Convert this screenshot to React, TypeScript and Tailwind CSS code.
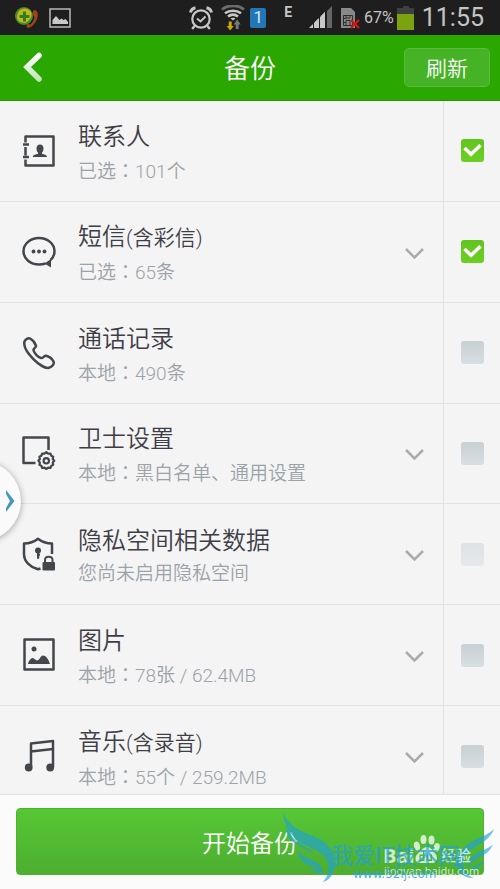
import { useState, type ReactNode } from "react";

type Item = {
  id: string;
  title: string;
  note?: string;
  label?: string;
  detail: string;
  expandable: boolean;
  disabled?: boolean;
  icon: ReactNode;
};

const iconClass = "h-[34px] w-[34px] shrink-0 text-[#43474b]";

function ContactsIcon() {
  return (
    <svg className={iconClass} viewBox="0 0 34 34" fill="none" stroke="currentColor" strokeWidth="2.500" aria-hidden="true">
      <path d="M3.500 8.500V2.500h28v29h-28v-6M3.500 13v8.500" strokeLinejoin="round" />
      <path d="M1 10.500h6M1 23h6" />
      <path
        d="M18 10.500c2 0 3.500 1.500 3.500 4 0 2-.8 3.400-1.500 4v1.300c1.800.6 5 1 5 3.200H10.800c0-2.200 3.300-2.600 5.200-3.200v-1.300c-.8-.6-1.500-2-1.500-4 0-2.500 1.500-4 3.500-4z"
        fill="currentColor"
        stroke="none"
      />
    </svg>
  );
}

function MessageIcon() {
  return (
    <svg className={iconClass} viewBox="0 0 34 34" fill="none" stroke="currentColor" strokeWidth="2.500" aria-hidden="true">
      <path d="M28.500 25c2.500-2.300 4-5.300 4-8.700C32.500 8.900 25.600 3 17 3S1.500 8.900 1.500 16.300 8.400 29.500 17 29.500c2.400 0 4.700-.4 6.700-1.200" />
      <path d="M22.500 28.500l6.500 4v-8.500z" fill="currentColor" stroke="none" />
      <g fill="currentColor" stroke="none">
        <circle cx="11.500" cy="16.500" r="1.900" />
        <circle cx="17" cy="16.500" r="1.900" />
        <circle cx="22.500" cy="16.500" r="1.900" />
      </g>
    </svg>
  );
}

function PhoneIcon() {
  return (
    <svg className={iconClass} viewBox="0 0 34 34" fill="none" stroke="currentColor" strokeWidth="2.500" strokeLinejoin="round" aria-hidden="true">
      <path d="M2.500 5.500C3.500 3 6.500 1.600 8.500 2.800c2.500 1.500 4.800 4.700 5.500 7 .5 1.700-3 2.500-2.500 4.500.7 3 4.800 7 7.500 7.700 2.200.5 3.200-2.700 5-2.200 3 .8 6.500 3.700 7.500 5.700 1.200 2.500-1.500 5.500-4.500 6.300C20.500 33.500 0 15.500 2.500 5.500z" />
    </svg>
  );
}

function SettingsIcon() {
  return (
    <svg className={iconClass} viewBox="0 0 34 34" fill="none" stroke="currentColor" strokeWidth="2.500" strokeLinejoin="round" aria-hidden="true">
      <path d="M13.500 27H1.500V1.500h25V14" />
      <path
        strokeWidth="2.200"
        d="M22.500 17.600L24.300 16.200L26.100 17.600L28.400 17.500L29.200 19.700L31.200 20.800L30.700 23L32.200 24.800L30.700 26.600L31.200 28.800L29.200 29.900L28.400 32L26.100 31.700L24.300 33L22.500 31.700L20.200 32L19.400 29.900L17.400 28.800L17.900 26.600L16.400 24.800L17.900 23L17.400 20.800L19.400 19.700L20.200 17.500Z"
      />
      <circle cx="24.300" cy="24.800" r="2.700" strokeWidth="2.200" />
    </svg>
  );
}

function PrivacyIcon() {
  return (
    <svg className={iconClass} viewBox="0 0 34 34" fill="none" stroke="currentColor" strokeWidth="2.500" strokeLinejoin="round" aria-hidden="true">
      <path d="M30 17V6.500C24.500 6.500 20 5 16 1.800 12 5 7.500 6.500 2 6.500V17c0 7.500 6 13 14 15.300l2.500-.8" />
      <g fill="currentColor" stroke="none">
        <circle cx="16" cy="13.500" r="3" />
        <path d="M15 14h2.200v2.700H18v2h-.8v3H15z" />
        <rect x="20.500" y="25" width="12.500" height="8.500" rx="1" />
      </g>
      <path d="M23 25.500V23c0-4.300 7.500-4.300 7.500 0v2.500" strokeWidth="2" />
    </svg>
  );
}

function PictureIcon() {
  return (
    <svg className={iconClass} viewBox="0 0 34 34" fill="none" stroke="currentColor" strokeWidth="2.500" strokeLinejoin="round" aria-hidden="true">
      <rect x="2.500" y="1.500" width="29" height="30" />
      <circle cx="12" cy="11" r="2.500" fill="currentColor" stroke="none" />
      <path d="M6 26c.5-3 3-6 4.500-6 2 0 3 2.500 4.500 2.500 2.500 0 3.500-5 6-5 3.500 0 6 5 7 8.500z" fill="currentColor" stroke="none" />
    </svg>
  );
}

function MusicIcon() {
  return (
    <svg className={iconClass} viewBox="0 0 34 34" fill="none" stroke="currentColor" strokeWidth="2.500" strokeLinejoin="round" aria-hidden="true">
      <path d="M9 28V4.500L31 2v26M9 12.500L31 10" />
      <circle cx="6.700" cy="28.500" r="3.900" fill="currentColor" stroke="none" />
      <circle cx="28.200" cy="28.500" r="3.900" fill="currentColor" stroke="none" />
    </svg>
  );
}

const items: Item[] = [
  { id: "contacts", title: "联系人", label: "已选", detail: "101个", expandable: false, icon: <ContactsIcon /> },
  { id: "sms", title: "短信", note: "(含彩信)", label: "已选", detail: "65条", expandable: true, icon: <MessageIcon /> },
  { id: "calls", title: "通话记录", label: "本地", detail: "490条", expandable: false, icon: <PhoneIcon /> },
  { id: "settings", title: "卫士设置", label: "本地", detail: "黑白名单、通用设置", expandable: true, icon: <SettingsIcon /> },
  { id: "privacy", title: "隐私空间相关数据", detail: "您尚未启用隐私空间", expandable: true, disabled: true, icon: <PrivacyIcon /> },
  { id: "pictures", title: "图片", label: "本地", detail: "78张 / 62.4MB", expandable: true, icon: <PictureIcon /> },
  { id: "music", title: "音乐", note: "(含录音)", label: "本地", detail: "55个 / 259.2MB", expandable: true, icon: <MusicIcon /> },
];

function StatusBar() {
  return (
    <div className="flex h-[35px] shrink-0 items-center justify-between bg-[#1e1e1e] pr-4 pl-[15px] text-[#c4c4c4]">
      <div className="flex items-center gap-[10px]">
        <svg className="h-6 w-6" viewBox="0 0 24 24" aria-hidden="true">
          <circle cx="9" cy="10" r="9" fill="#3f8f2c" />
          <path d="M4 5c4-4 10-3 12 1 2 5-2 9-6 11-5 0-8-3-8-6 0-2 1-4 2-6z" fill="#c5b51c" />
          <path d="M8 5.500h3V9h3.500v3H11v3.500H8V12H4.500V9H8z" fill="#2f7d22" />
          <path d="M20 4c3 1 3.500 5 2 9-2 5-6 9-9.500 9-1.500-1-1.500-3 0-4l3 .5c2-2 3.500-4.500 4-7.500l-2-3c0-2 1-4 2.500-4z" fill="#9c4418" />
        </svg>
        <svg className="h-5 w-[22px]" viewBox="0 0 22 20" fill="none" aria-hidden="true">
          <rect x="1" y="1" width="20" height="18" stroke="#b9b9b9" strokeWidth="1.500" />
          <path d="M3.500 16v-4l3.500-4 3.500 4 2-1.500 2 1.500 2-1 2.500 3v2z" fill="#c9c9c9" />
        </svg>
      </div>
      <div className="flex h-full items-center">
        <svg className="h-6 w-6" viewBox="0 0 24 24" fill="none" stroke="#c6c6c6" aria-hidden="true">
          <circle cx="12" cy="13" r="8.700" strokeWidth="2.200" />
          <path d="M8 12.500l3.500 3 5-5" strokeWidth="2" />
          <path d="M1.500 6.500c.5-2.500 2.500-4.300 5-4.800M22.500 6.500c-.5-2.500-2.500-4.300-5-4.800" strokeWidth="3" />
          <path d="M5.500 20l-2.300 3M18.500 20l2.300 3" strokeWidth="2.300" />
        </svg>
        <svg className="ml-2 h-[26px] w-6" viewBox="0 0 24 26" fill="none" aria-hidden="true">
          <path d="M1 4.500C7-.5 17-.5 23 4.500" stroke="#6b6b6b" strokeWidth="2.800" />
          <path d="M4 8.300c4.500-3.500 11.500-3.500 16 0M7 11.500c3-2.300 7-2.300 10 0" stroke="#c8c8c8" strokeWidth="2.600" />
          <path d="M9.500 13.500c1.500-1 3.500-1 5 0L12 15.500z" fill="#c8c8c8" />
          <path d="M7.700 16.500h3V21h2l-3.500 4.500L5.700 21h2z" fill="#cda900" />
          <path d="M14.700 24h3v-4.500h2l-3.500-5-3.500 5h2z" fill="#777" />
        </svg>
        <span className="ml-[5px] flex h-5 w-4 items-center justify-center rounded-[2px] bg-[#2377b8] text-[17px] leading-none text-[#dde9f2]">
          1
        </span>
        <span className="ml-[18px] self-start pt-1 text-[14px] leading-4 font-bold">E</span>
        <svg className="ml-[17px] h-[23px] w-6" viewBox="0 0 24 23" aria-hidden="true">
          <path d="M0 22l4-4v4zM6 22v-6l4-4v10zM12 22V10l4-4v16z" fill="#c8c8c8" />
          <path d="M5 22v-5l4-4v9zM11 22V11l5-5v16z" fill="#c8c8c8" />
          <path d="M18 22V5l5-5v22z" fill="#666" />
        </svg>
        <svg className="ml-[7px] h-[22px] w-5" viewBox="0 0 20 22" fill="none" aria-hidden="true">
          <path d="M1 1h10l4 4v16H1z" fill="#888" />
          <path d="M3.500 8.500h9v10h-9zM6 8.500V11h4V8.500M6 18.500v-5h4v5M3.500 11.500H6M3.500 15.500H6" stroke="#2d2d2d" />
          <path d="M11 13l8 8M19 13l-8 8" stroke="#cf1717" strokeWidth="2.300" />
        </svg>
        <span className="ml-1 text-[16px] leading-none">67%</span>
        <svg className="ml-[3px] h-6 w-[17px]" viewBox="0 0 17 24" aria-hidden="true">
          <path d="M6 0h6v2h5v6H0V2h6z" fill="#3f3f3f" />
          <path d="M0 8h17v16H0z" fill="#7ba30d" />
        </svg>
        <span className="ml-2 text-[25px] leading-none">11:55</span>
      </div>
    </div>
  );
}

function Row({ item, checked, onToggle }: { item: Item; checked: boolean; onToggle: () => void }) {
  return (
    <li className="flex border-b border-[#e2e2e2]">
      <div className="flex min-w-0 flex-1 items-center pr-[19px] pl-[22px]">
        {item.icon}
        <label htmlFor={item.id} className="ml-[22px] min-w-0 flex-1 pt-1 font-[350] whitespace-nowrap">
          <span className="block text-[24px] leading-9 text-[#3e3e46]">
            {item.title}
            {item.note && <span className="text-[21px]">{item.note}</span>}
          </span>
          <span className="block text-[19px] leading-[30px] text-[#9ba3a8]">
            {item.label}
            {item.label && (
              <span lang="zh-TW" className="font-['Noto_Sans_CJK_TC',sans-serif]">
                ：
              </span>
            )}
            {item.detail}
          </span>
        </label>
        {item.expandable && (
          <button type="button" aria-label="展开" className="flex h-10 w-[19px] shrink-0 items-center pt-1">
            <svg className="h-3 w-[19px]" viewBox="0 0 19 12" fill="none" stroke="#a9acae" strokeWidth="2.500" aria-hidden="true">
              <path d="M1 1l8.500 8.500L18 1" />
            </svg>
          </button>
        )}
      </div>
      <div className="grid w-[57px] shrink-0 place-items-center border-l border-[#e2e2e2]">
        <input
          id={item.id}
          type="checkbox"
          checked={checked}
          disabled={item.disabled}
          onChange={onToggle}
          className="col-start-1 row-start-1 h-[23px] w-[23px] appearance-none rounded-[3px] bg-linear-to-b from-[#c9d0d4] to-[#d8dfe2] checked:from-[#62c41f] checked:to-[#6bd022] disabled:from-[#dee2e4] disabled:to-[#e5e9eb]"
        />
        {checked && (
          <svg
            className="pointer-events-none col-start-1 row-start-1 h-[23px] w-[23px]"
            viewBox="0 0 23 23"
            fill="none"
            stroke="#fff"
            strokeWidth="3.500"
            aria-hidden="true"
          >
            <path d="M3.500 9l6.500 6.300L19.500 6.300" />
          </svg>
        )}
      </div>
    </li>
  );
}

function Watermark() {
  return (
    <div className="pointer-events-none absolute right-0 bottom-0 h-[80px] w-[220px]">
      <svg className="absolute inset-0 h-full w-full" viewBox="0 0 220 80" aria-hidden="true">
        <g fill="#fff" fillOpacity="0.750">
          <ellipse cx="137" cy="37" rx="3" ry="4.500" transform="rotate(-15 137 37)" />
          <ellipse cx="143.500" cy="30.500" rx="3" ry="4.500" />
          <ellipse cx="151.500" cy="31" rx="3" ry="4.500" />
          <ellipse cx="156.500" cy="38.500" rx="3" ry="4.500" transform="rotate(20 156.500 38.500)" />
          <path
            fillRule="evenodd"
            d="M147 38c4 0 6 4.500 8.500 7s2 9-3 9H140c-5 0-6-6-2.500-9s5.500-7 9.500-7zM143 41.500v4h-3.500v6.500h5V41.500zM140.800 47h2.400v3.500h-2.400zM146.500 45.500V52h5.500v-6.500h-1.500v5H148v-5z"
          />
        </g>
        <g fill="#21a0dc" fillOpacity="0.650">
          <path d="M3 3c5 12 13 17 25 22 16 6 27 14 27 29 0 10-6 18-12 19 5-6 7-12 5-19-3-10-14-14-25-19C12 30 4 17 3 3z" />
          <path d="M5 17c6 12 15 19 26 24l3 4c-4-3-8-4-13-7C12 33 6 28 5 17z" />
          <path d="M17 41c5 7 12 8 19 12 5 3 7 7 6 12-3-5-6-6-11-8-8-3-13-8-14-16z" />
          <path d="M31 60c6 0 11 1 13 6-5-3-8-1-13-6z" />
          <path d="M214 20c-4 10-11 13-19 18-9 6-14 14-11 22 2 5 6 8 10 9-9 1-16-5-17-14-1-11 8-19 18-24 8-4 14-6 19-11z" />
          <path d="M213 35c-3 8-9 11-15 14-6 3-9 7-9 11-3-6 0-11 6-15 7-4 14-5 18-10z" />
          <path d="M204 52c-2 5-7 7-12 12-1-5 4-8 12-12z" />
        </g>
      </svg>
      <span className="absolute top-[35px] left-[103px] font-['Open_Sans',sans-serif] text-[20px] leading-6 font-bold text-white/75">Bai</span>
      <span className="absolute top-[35px] left-[161px] text-[15px] leading-6 font-medium text-white/75">经验</span>
      <span className="absolute top-[52px] left-[104px] font-['Noto_Sans',sans-serif] text-[11px] leading-5 text-white/75">
        jingyan.baidu.com
      </span>
      <span className="absolute top-[31px] left-[51px] text-[22px] leading-8 font-medium whitespace-nowrap text-[#21a0dc]/70">
        我爱IT技术网
      </span>
      <span className="absolute top-[55px] left-[73px] font-['DejaVu_Sans',sans-serif] text-[12px] leading-5 text-[#2aa3ec]/85">
        www.52ij.com
      </span>
    </div>
  );
}

export default function App() {
  const [selected, setSelected] = useState<Record<string, boolean>>({ contacts: true, sms: true });

  return (
    <div
      lang="zh-CN"
      className="relative flex h-screen flex-col overflow-hidden bg-[#fbfbfb] font-[Roboto,'Noto_Sans_CJK_SC',sans-serif]"
    >
      <StatusBar />
      <header className="grid h-[66px] shrink-0 grid-cols-[1fr_auto_1fr] items-center border-b border-[#229800] bg-[#2aa700] px-[10px] text-white">
        <button type="button" aria-label="返回" className="justify-self-start pl-3">
          <svg className="h-8 w-[22px]" viewBox="0 0 22 32" fill="none" strokeWidth="5.500" strokeLinecap="round" aria-hidden="true">
            <defs>
              <linearGradient id="back" x1="0" y1="0" x2="0" y2="1">
                <stop offset="0" stopColor="#fff" />
                <stop offset="1" stopColor="#c4e5ba" />
              </linearGradient>
            </defs>
            <path d="M17 3.500L5 15l12 12" stroke="url(#back)" />
          </svg>
        </button>
        <h1 className="pt-[2px] text-[26px] leading-9 font-[350]">备份</h1>
        <button
          type="button"
          className="h-[39px] w-[86px] justify-self-end rounded-[5px] border border-[#5abb3a] bg-[#46b225] pt-[2px] text-[21px] leading-9 font-[350]"
        >
          刷新
        </button>
      </header>

      <main className="min-h-0 flex-1 overflow-hidden border-b border-[#e2e2e2] bg-[#f4f4f4]">
        <ul className="grid h-[706px] auto-rows-fr">
          {items.map((item) => (
            <Row
              key={item.id}
              item={item}
              checked={!!selected[item.id]}
              onToggle={() => setSelected((s) => ({ ...s, [item.id]: !s[item.id] }))}
            />
          ))}
        </ul>
      </main>

      <footer className="relative shrink-0 px-4 pt-[13px] pb-[14px]">
        <button
          type="button"
          className="h-[67px] w-full rounded-[4px] border border-[#4cb52b] bg-linear-to-b from-[#56c735] to-[#4dae30] pt-1 text-[24px] leading-9 font-[350] text-white"
        >
          开始备份
        </button>
        <Watermark />
      </footer>

      <button
        type="button"
        aria-label="打开侧栏"
        className="absolute top-[461px] -left-[59px] flex h-20 w-20 items-center justify-end rounded-full bg-[#fafafa] pr-[6px] shadow-[0_1px_6px_rgba(0,0,0,0.35)]"
      >
        <svg className="h-[22px] w-[9px]" viewBox="0 0 9 22" aria-hidden="true">
          <path d="M0 0l8.500 11L0 22v-4l4-7-4-7z" fill="#4798b8" />
        </svg>
      </button>
    </div>
  );
}
